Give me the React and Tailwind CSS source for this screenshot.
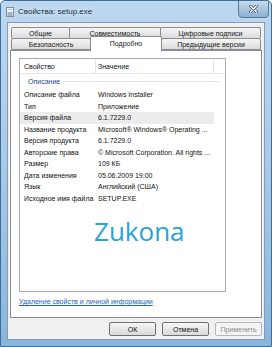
import React from 'react';

const rows = [
  ['Описание файла', 'Windows Installer'],
  ['Тип', 'Приложение'],
  ['Версия файла', '6.1.7229.0', true],
  ['Название продукта', 'Microsoft® Windows® Operating ...'],
  ['Версия продукта', '6.1.7229.0'],
  ['Авторские права', '© Microsoft Corporation. All rights ...'],
  ['Размер', '109 КБ'],
  ['Дата изменения', '05.06.2009 19:00'],
  ['Язык', 'Английский (США)'],
  ['Исходное имя файла', 'SETUP.EXE'],
];

const Tab = ({ label, className = '' }) => (
  <div
    className={`flex items-center justify-center whitespace-nowrap rounded-t-[2px] border border-[#898c95] bg-gradient-to-b from-[#f5f5f5] to-[#dcdcdc] text-[7px] leading-none text-[#1a1a1a] ${className}`}
  >
    {label}
  </div>
);

const Button = ({ label, disabled }) => (
  <div
    className={`flex h-[14px] w-[47px] items-center justify-center rounded-[2px] border text-[7px] leading-none ${
      disabled
        ? 'border-[#b5b8bb] bg-[#f4f4f4] text-[#8d8d8d]'
        : 'border-[#707070] bg-gradient-to-b from-[#f6f6f6] to-[#dadada] text-[#111]'
    }`}
  >
    {label}
  </div>
);

export default function App() {
  return (
    <div className="relative flex h-[347px] w-[272px] flex-col overflow-hidden rounded-t-[5px] border border-[#3d6e9c] bg-gradient-to-b from-[#bcd8ef] via-[#a7c9e7] to-[#8ab5dc] font-['Liberation_Sans',Arial,sans-serif]">
      <div className="flex h-[21px] items-center gap-[4px] pl-[5px] pt-[1px]">
        <svg width="8" height="10" viewBox="0 0 8 10">
          <rect x="0.5" y="0.5" width="7" height="9" fill="#eef2f6" stroke="#7b8ea3" />
          <rect x="1.5" y="5" width="5" height="4" fill="#9fb3c7" />
          <rect x="2" y="2" width="4" height="1" fill="#b9c7d5" />
        </svg>
        <span className="text-[8px] leading-none text-[#1b2f48] [text-shadow:0_0_6px_rgba(255,255,255,0.9)]">
          Свойства: setup.exe
        </span>
      </div>

      <div className="absolute right-[2px] top-[-1px] flex h-[18px] w-[31px] items-center justify-center rounded-b-[4px] border border-[#54789c] bg-gradient-to-b from-[#c9dcef] via-[#a9c4de] to-[#8eb0d2]">
        <svg width="9" height="8" viewBox="0 0 9 8">
          <path d="M1.5 1 L7.5 7 M7.5 1 L1.5 7" stroke="#3c4f66" strokeWidth="2.6" strokeLinecap="round" />
          <path d="M1.5 1 L7.5 7 M7.5 1 L1.5 7" stroke="#ffffff" strokeWidth="1.3" strokeLinecap="round" />
        </svg>
      </div>

      <div className="mx-[6px] mb-[6px] flex flex-1 flex-col border border-[#7f9cba] bg-[#f0f0f0] px-[2px] pt-[4px]">
        <div className="mx-[1px] flex h-[11px]">
          <Tab label="Общие" className="w-[59px] border-b-0" />
          <Tab label="Совместимость" className="-ml-px w-[92px] border-b-0" />
          <Tab label="Цифровые подписи" className="-ml-px w-[101px] border-b-0" />
        </div>
        <div className="relative z-10 mx-[1px] flex h-[12px] items-end">
          <Tab label="Безопасность" className="h-[12px] w-[80px]" />
          <div className="-mb-px -ml-px flex h-[15px] w-[72px] items-center justify-center rounded-t-[2px] border border-b-0 border-[#898c95] bg-white pb-[1px] text-[7px] leading-none text-[#1a1a1a]">
            Подробно
          </div>
          <Tab label="Предыдущие версии" className="-ml-px h-[12px] w-[100px]" />
        </div>

        <div className="flex h-[268px] flex-col border border-[#898c95] bg-white pl-[8px] pt-[7px]">
          <div className="flex h-[234px] w-[207px] flex-col border border-[#aaaaaa] text-[7px] leading-none text-[#111]">
            <div className="flex h-[15px] items-center border-b border-[#e5e5e5]">
              <div className="flex h-full w-[76px] items-center border-r border-[#e3e3e3] pl-[4px]">Свойство</div>
              <div className="flex h-full w-[118px] items-center border-r border-[#e3e3e3] pl-[2px]">Значение</div>
            </div>
            <div className="flex h-[15px] items-center gap-[3px] pl-[8px] pr-[6px]">
              <span className="text-[#1c4a86]">Описание</span>
              <div className="h-px flex-1 bg-[#dde4ee]" />
            </div>
            {rows.map(([name, value, hl]) => (
              <div
                key={name}
                className={`flex h-[11.5px] w-[194px] items-center whitespace-nowrap ${hl ? 'bg-[#ececec]' : ''}`}
              >
                <div className="w-[78px] shrink-0 pl-[4px]">{name}</div>
                <div>{value}</div>
              </div>
            ))}
            <div className="mt-[14px] pl-[74px] font-['Open_Sans',sans-serif] text-[26px] leading-none text-[#2aa3d3]">
              Zukona
            </div>
          </div>
          <div className="mt-[6px] text-[7px] leading-none text-[#2266bb] underline">
            Удаление свойств и личной информации
          </div>
        </div>

        <div className="mt-[4px] flex justify-end gap-[6px]">
          <Button label="ОК" />
          <Button label="Отмена" />
          <Button label="Применить" disabled />
        </div>
      </div>
    </div>
  );
}
